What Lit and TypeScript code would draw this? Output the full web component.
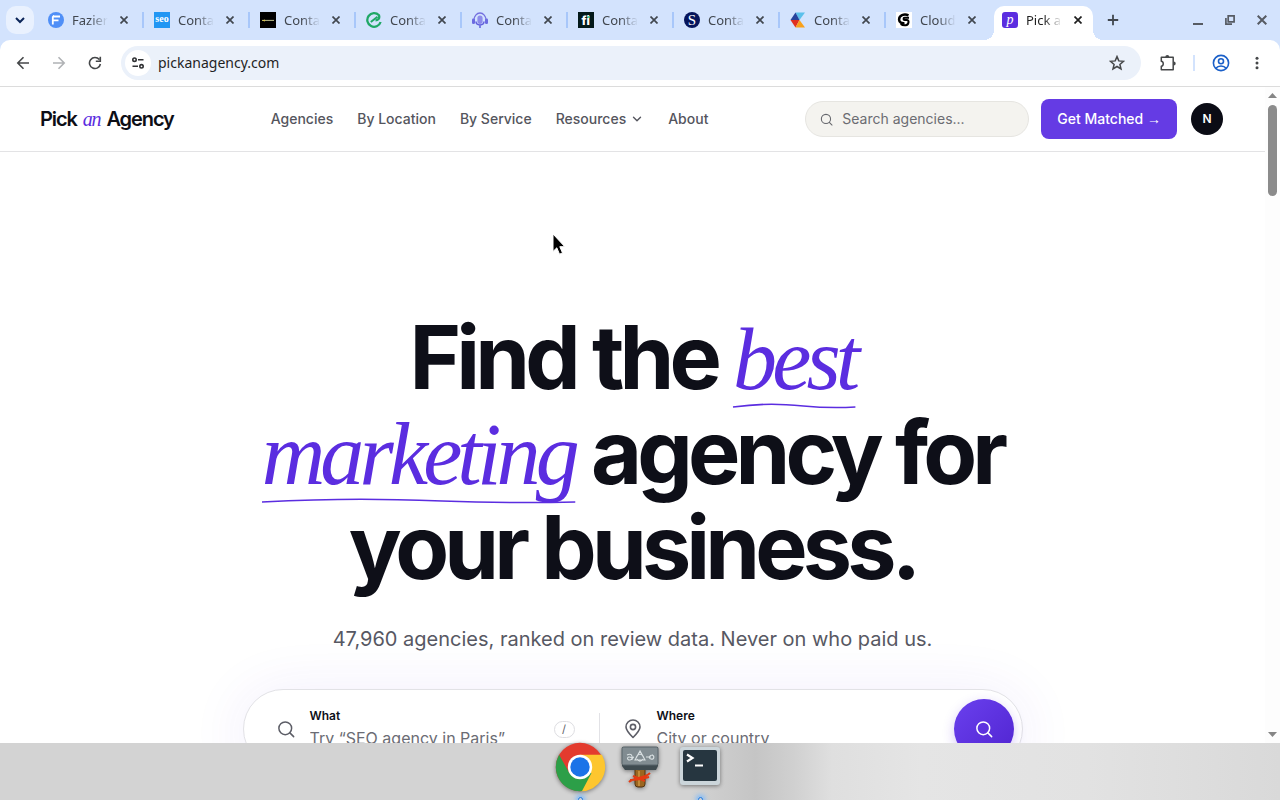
import { LitElement, html, css, svg, nothing } from "lit";
import { customElement, property } from "lit/decorators.js";

const favicons: Record<string, unknown> = {
  fazier: svg`<circle cx="8" cy="8" r="8" fill="#4f8ff7"/><path d="M5 4.500h7M5 8.300h5.500" stroke="#fff" stroke-width="1.800"/><path d="M6 3.700 4.800 5v7.500" fill="none" stroke="#fff" stroke-width="1.800"/>`,
  seo: svg`<rect width="16" height="16" fill="#2196f3"/><text x="8" y="10.400" text-anchor="middle" font-family="Liberation Serif, serif" font-weight="700" font-size="10" fill="#fff">seo</text>`,
  dark: svg`<rect width="16" height="16" fill="#000"/><path d="M2 8.400h12" stroke="#bdbd8a" stroke-width="1"/><path d="M2 8.400 5 7.400v2z" fill="#d8c34e"/>`,
  ecircle: svg`<path d="M14.600 10A6.800 6.800 0 1 1 13 3.300C14 6.500 12 8.300 9.500 8.300" fill="none" stroke="#1fa866" stroke-width="2.300"/><path d="M4.800 10 11.500 4.800" fill="none" stroke="#1fa866" stroke-width="2"/>`,
  mic: svg`<path d="M2 8a6 7 0 0 1 12 0" fill="none" stroke="#7470df" stroke-width="1.300"/><rect x="0" y="6.500" width="3" height="5.500" rx="1.300" fill="#6c6be0"/><rect x="13" y="6.500" width="3" height="5.500" rx="1.300" fill="#6c6be0"/><rect x="5.400" y="3.500" width="5.200" height="8.400" rx="2.600" fill="#8d8bea"/><path d="M4 9.500c0 4.500 8 4.500 8 0M8 12.500V16" fill="none" stroke="#6260dc" stroke-width="1.500"/>`,
  fi: svg`<rect width="16" height="16" fill="#041a1a"/><text x="7.800" y="12.600" text-anchor="middle" font-family="Inter, sans-serif" font-weight="800" font-size="12" fill="#fff">fi</text><rect x="9.400" y="4" width="2.300" height="2" fill="#52d6a2"/>`,
  s: svg`<circle cx="8" cy="8" r="8" fill="#06155c"/><text x="8" y="13" text-anchor="middle" font-family="Liberation Serif, serif" font-size="15" fill="#fff">S</text>`,
  kite: svg`<path d="M5.500.5H15L9.500 8z" fill="#5bc0eb"/><path d="M5.500.5 9.500 8H.5z" fill="#27439c"/><path d="M.5 8h9l-4 7.500z" fill="#e0301e"/><path d="M9.500 8 15 15.500H5.500z" fill="#f9a11b"/>`,
  g: svg`<rect width="16" height="16" fill="#fff"/><path d="M12.500 3.400C8 1.200 3 3.600 3.100 7.600c.1 3 2.600 3.900 5.400 3.600" fill="none" stroke="#000" stroke-width="2.500"/><path d="M13 5.800H8.600c-1.400 0-1.400 2.200 0 2.200h2.300c2.600 0 2 4.800-1.200 5.200-2 .2-3.700-.2-5-1.300" fill="none" stroke="#000" stroke-width="2"/>`,
  pick: svg`<rect width="16" height="16" rx="3" fill="#5b2de0"/><text x="8" y="11.600" text-anchor="middle" font-family="Liberation Serif, serif" font-style="italic" font-size="14" fill="#fff">p</text>`,
};

const tabs = [
  { icon: "fazier", title: "Fazier Launch" },
  { icon: "seo", title: "Contact us" },
  { icon: "dark", title: "Contact us" },
  { icon: "ecircle", title: "Contact us" },
  { icon: "mic", title: "Contact us" },
  { icon: "fi", title: "Contact us" },
  { icon: "s", title: "Contact us" },
  { icon: "kite", title: "Contact us" },
  { icon: "g", title: "Cloudways" },
  { icon: "pick", title: "Pick an Agency", active: true },
];

const magnifier = (size: number) => html`<svg width=${size} height=${size} viewBox="0 0 24 24" fill="none" stroke="currentColor" stroke-width="2" stroke-linecap="round" aria-hidden="true"><circle cx="11" cy="11" r="8.500"/><path d="m17.200 17.200 5 5"/></svg>`;

@customElement("browser-tab")
class BrowserTab extends LitElement {
  @property() icon = "";
  @property() label = "";
  @property({ type: Boolean, reflect: true }) active = false;
  @property({ type: Boolean, reflect: true }) divided = false;

  static styles = css`
    :host { flex: 0 1 106px; min-width: 0; height: 100%; box-sizing: border-box; display: flex; align-items: center; padding: 0 10px 0 12px; position: relative; isolation: isolate; color: #41474f; }
    :host([divided])::before { content: ""; position: absolute; left: 0; top: 12px; width: 2px; height: 16px; background: #a8c7fa; }
    :host([active]) { color: #1f1f1f; }
    .shape { position: absolute; z-index: -1; inset: 6px 3px 0 4px; background: #fff; border-radius: 10px 10px 0 0; }
    .shape::before, .shape::after { content: ""; position: absolute; bottom: 0; width: 10px; height: 10px; }
    .shape::before { right: 100%; background: radial-gradient(circle at 0 0, transparent 10px, #fff 10px); }
    .shape::after { left: 100%; background: radial-gradient(circle at 100% 0, transparent 10px, #fff 10px); }
    .icon { flex: none; }
    .title { flex: 1; min-width: 0; margin: 0 8px; overflow: hidden; white-space: nowrap; font: 13px/20px "Noto Sans", sans-serif; -webkit-mask-image: linear-gradient(90deg, #000 50%, transparent); mask-image: linear-gradient(90deg, #000 50%, transparent); }
    button { flex: none; width: 16px; height: 16px; padding: 0; border: 0; background: none; color: inherit; display: grid; place-items: center; }
  `;

  render() {
    return html`
      ${this.active ? html`<span class="shape"></span>` : nothing}
      <svg class="icon" width="16" height="16" viewBox="0 0 16 16" aria-hidden="true">${favicons[this.icon]}</svg>
      <span class="title">${this.label}</span>
      <button aria-label="Close tab"><svg width="8" height="8" viewBox="0 0 8 8" stroke="currentColor" stroke-width="1.700"><path d="m.5.5 7 7m0-7-7 7"/></svg></button>
    `;
  }
}

@customElement("browser-chrome")
class BrowserChrome extends LitElement {
  static styles = css`
    :host { display: block; font-family: "Noto Sans", sans-serif; background: #d3e3fd; }
    button { padding: 0; border: 0; background: none; color: inherit; display: grid; place-items: center; flex: none; }
    .strip { display: flex; align-items: center; height: 40px; color: #41474f; }
    .list { width: 28px; height: 28px; margin: 0 2px 0 6px; border-radius: 10px; background: #e9f1fe; color: #0b2559; }
    .tabs { display: flex; flex: 0 1 auto; min-width: 0; height: 100%; }
    .new { width: 28px; height: 28px; margin-left: 3px; }
    .window { display: flex; margin-left: auto; padding-right: 2px; color: #565b63; }
    .window button { width: 32px; height: 28px; }
    .toolbar { display: flex; align-items: center; box-sizing: border-box; height: 47px; padding: 0 5px; background: #fff; border-radius: 10px 10px 0 0; border-bottom: 1px solid #dcdcdc; color: #454749; }
    .toolbar button { width: 36px; height: 34px; }
    .toolbar .off { color: #b0b2b5; }
    .address { flex: 1; min-width: 0; display: flex; align-items: center; height: 34px; margin: 0 9px 0 8px; padding: 0 6px 0 4px; border-radius: 17px; background: #ebf1fa; }
    .toolbar .site { width: 26px; height: 26px; border-radius: 13px; background: #fff; color: #303134; }
    .address input { flex: 1; min-width: 0; margin: 0 0 0 7px; padding: 0; border: 0; outline: 0; background: none; font: 14px/20px "Noto Sans", sans-serif; color: #1f1f1f; }
    .rule { width: 2px; height: 16px; margin: 0 8px 0 7px; background: #d3e3fd; }
    .toolbar .profile { color: #1a5fc8; }
  `;

  render() {
    return html`
      <div class="strip">
        <button class="list" aria-label="Search tabs"><svg width="10" height="7" viewBox="0 0 10 7" fill="none" stroke="currentColor" stroke-width="2"><path d="m1 1 4 4 4-4"/></svg></button>
        <div class="tabs">
          ${tabs.map((t, i) => html`<browser-tab .icon=${t.icon} .label=${t.title} ?active=${!!t.active} ?divided=${i > 0 && !t.active}></browser-tab>`)}
        </div>
        <button class="new" aria-label="New tab"><svg width="12" height="12" viewBox="0 0 12 12" stroke="currentColor" stroke-width="1.800"><path d="M6 .8v10.400M.8 6h10.400"/></svg></button>
        <div class="window">
          <button aria-label="Minimize"><svg width="10" height="10" viewBox="0 0 10 10" stroke="currentColor" stroke-width="2"><path d="M0 9h10"/></svg></button>
          <button aria-label="Restore"><svg width="10" height="10" viewBox="0 0 10 10" fill="none" stroke="currentColor" stroke-width="1.700"><path d="M3.200.9h5.900v5.900H3.200zM.9 3v6.100H7"/></svg></button>
          <button aria-label="Close"><svg width="10" height="10" viewBox="0 0 10 10" stroke="currentColor" stroke-width="2"><path d="m.7.7 8.600 8.600m0-8.600L.7 9.300"/></svg></button>
        </div>
      </div>
      <div class="toolbar">
        <button aria-label="Back"><svg width="14" height="14" viewBox="0 0 14 14" fill="none" stroke="currentColor" stroke-width="1.600"><path d="M13 7H2m5.500-5.700L1.800 7l5.700 5.700"/></svg></button>
        <button class="off" aria-label="Forward"><svg width="14" height="14" viewBox="0 0 14 14" fill="none" stroke="currentColor" stroke-width="1.600"><path d="M1 7h11M6.500 1.300 12.200 7l-5.700 5.700"/></svg></button>
        <button aria-label="Reload"><svg width="14" height="14" viewBox="0 0 14 14" fill="none" stroke="currentColor" stroke-width="1.600"><path d="M11.300 3.600A5.500 5.500 0 1 0 12.400 8M12.300.8v4.500H7.800"/></svg></button>
        <div class="address">
          <button class="site" aria-label="Site information"><svg width="14" height="14" viewBox="0 0 14 14" fill="none" stroke="currentColor" stroke-width="1.600"><circle cx="3.500" cy="3.700" r="1.700"/><path d="M7 3.700h5.500M1.500 10.300H7"/><circle cx="10.500" cy="10.300" r="1.700"/></svg></button>
          <input type="text" aria-label="Address" value="pickanagency.com">
          <button aria-label="Bookmark this page"><svg width="16" height="16" viewBox="0 0 16 16" fill="none" stroke="currentColor" stroke-width="1.500"><path d="m8 1.600 1.800 4.300 4.700.4-3.600 3.100 1.100 4.600-4-2.500L4 14l1.100-4.600-3.600-3.100 4.700-.4z"/></svg></button>
        </div>
        <button aria-label="Extensions"><svg width="18" height="18" viewBox="0 0 18 18" fill="none" stroke="currentColor" stroke-width="1.500"><path d="M2.300 3.300H14.200V15.700H2.300V12.300c2.600-.4 2.600-4.600 0-5z" stroke-linejoin="round"/><path d="M6.300 2.900a2 2 0 0 1 4 0zM14.700 7.600a2 2 0 0 1 0 4z" fill="currentColor" stroke="none"/></svg></button>
        <span class="rule"></span>
        <button class="profile" aria-label="Profile"><svg width="18" height="18" viewBox="0 0 18 18" fill="none" stroke="currentColor" stroke-width="1.600"><circle cx="9" cy="9" r="7.600"/><circle cx="9" cy="7.200" r="2.500"/><path d="M3.800 14.200c2.600-3 7.800-3 10.400 0"/></svg></button>
        <button aria-label="Menu"><svg width="4" height="14" viewBox="0 0 4 14" fill="currentColor"><circle cx="2" cy="2.200" r="1.500"/><circle cx="2" cy="7" r="1.500"/><circle cx="2" cy="11.800" r="1.500"/></svg></button>
      </div>
    `;
  }
}

@customElement("site-header")
class SiteHeader extends LitElement {
  static styles = css`
    :host { display: flex; align-items: center; justify-content: space-between; box-sizing: border-box; height: 65px; padding: 0 40px; border-bottom: 1px solid #e3e3e5; background: #fff; font-family: Inter, sans-serif; }
    a { color: inherit; text-decoration: none; }
    .logo { font-size: 20px; line-height: 28px; font-weight: 600; letter-spacing: -0.055em; color: #0d0e16; white-space: nowrap; }
    .logo em { margin: 0 2px; font-family: "Liberation Serif", serif; font-weight: 400; color: #5b2de0; }
    nav { display: flex; gap: 24px; font-size: 14px; line-height: 20px; font-weight: 500; color: #54555d; white-space: nowrap; }
    .drop { display: flex; align-items: center; gap: 4px; }
    .actions { display: flex; align-items: center; gap: 12px; }
    .search { display: flex; align-items: center; gap: 9px; box-sizing: border-box; width: 224px; height: 36px; padding: 0 14px; border: 1px solid #e6e5e1; border-radius: 18px; background: #f4f3ef; color: #65666c; }
    .search svg { flex: none; }
    .search input { flex: 1; min-width: 0; padding: 0; border: 0; outline: 0; background: none; font: 14px/20px Inter, sans-serif; color: #0d0e16; }
    .search input::placeholder { color: #6b6c72; opacity: 1; }
    .cta { height: 40px; padding: 0 16px; border: 0; border-radius: 8px; background: #653be4; color: #fff; font: 500 14px/20px Inter, sans-serif; white-space: nowrap; }
    .arrow { font-family: "Liberation Sans", sans-serif; }
    .avatar { width: 32px; height: 32px; margin: 0 2px; padding: 0; border: 0; border-radius: 50%; background: #0b0c15; color: #fff; font: 600 12px/16px Inter, sans-serif; }
  `;

  render() {
    return html`
      <a class="logo" href="#">Pick <em>an</em> Agency</a>
      <nav>
        <a href="#">Agencies</a>
        <a href="#">By Location</a>
        <a href="#">By Service</a>
        <a class="drop" href="#">Resources <svg width="14" height="14" viewBox="0 0 14 14" fill="none" stroke="currentColor" stroke-width="1.400" stroke-linecap="round" stroke-linejoin="round"><path d="m3.500 5.200 3.500 3.500 3.500-3.500"/></svg></a>
        <a href="#">About</a>
      </nav>
      <div class="actions">
        <label class="search">${magnifier(13)}<input type="search" aria-label="Search agencies" placeholder="Search agencies..."></label>
        <button class="cta">Get Matched <span class="arrow">→</span></button>
        <button class="avatar" aria-label="Account N">N</button>
      </div>
    `;
  }
}

@customElement("hero-section")
class HeroSection extends LitElement {
  static styles = css`
    :host { display: flex; flex-direction: column; align-items: center; padding: 158px 40px 80px; font-family: Inter, sans-serif; background: #fff; }
    h1 { margin: 0; max-width: 760px; text-align: center; font-size: 88px; line-height: 95px; font-weight: 700; letter-spacing: -0.055em; color: #0e0f18; }
    em { position: relative; display: inline-block; font-family: "Liberation Serif", serif; font-weight: 400; line-height: 80px; color: #5b2de0; }
    em svg { position: absolute; left: 0; bottom: -9px; width: 100%; height: 6px; overflow: visible; }
    .lead { margin: 29px 0 0; font-size: 20px; line-height: 30px; color: #575863; text-align: center; }
    form { display: flex; align-items: center; box-sizing: border-box; width: 100%; max-width: 780px; margin-top: 35px; padding: 9px 8px 9px 9px; border: 1px solid #e2e2e6; border-radius: 40px; background: #fff; box-shadow: 0 4px 60px rgba(91, 45, 224, .09); }
    .field { display: flex; align-items: center; min-width: 0; color: #5c5d66; }
    .what { flex: 1; padding: 0 24px; }
    .where { flex: 1; padding: 0 32px 0 24px; }
    .field > svg { flex: none; }
    .copy { flex: 1; min-width: 0; display: flex; flex-direction: column; gap: 2px; margin-left: 15px; }
    label { font-size: 12px; line-height: 16px; font-weight: 600; color: #0e0f18; }
    input { width: 100%; padding: 0; border: 0; outline: 0; background: none; font: 16px/24px Inter, sans-serif; color: #0e0f18; }
    input::placeholder { color: #6b6c74; opacity: 1; }
    kbd { box-sizing: border-box; width: 21px; height: 17px; border: 1px solid #dedee2; border-radius: 9px; text-align: center; font: 11px/15px Inter, sans-serif; color: #5c5d66; }
    .rule { width: 1px; height: 32px; background: #e2e2e6; }
    .go { flex: none; display: grid; place-items: center; width: 60px; height: 60px; padding: 0; border: 0; border-radius: 50%; color: #fff; background: linear-gradient(135deg, #6a40ee, #5024d0); box-shadow: 0 4px 12px rgba(91, 45, 224, .25); }
  `;

  private swash() {
    return html`<svg viewBox="0 0 200 6" preserveAspectRatio="none" fill="none" stroke="currentColor" stroke-width="1.600" aria-hidden="true"><path d="M0 4C50 0 80 1 115 3S170 5 200 4" vector-effect="non-scaling-stroke"/></svg>`;
  }

  render() {
    return html`
      <h1>Find the <em>best${this.swash()}</em> <em>marketing${this.swash()}</em> agency for your business.</h1>
      <p class="lead">47,960 agencies, ranked on review data. Never on who paid us.</p>
      <form>
        <div class="field what">
          ${magnifier(18)}
          <div class="copy"><label for="what">What</label><input id="what" type="text" placeholder="Try “SEO agency in Paris”"></div>
          <kbd>/</kbd>
        </div>
        <span class="rule"></span>
        <div class="field where">
          <svg width="18" height="20" viewBox="0 0 18 20" fill="none" stroke="currentColor" stroke-width="1.600" stroke-linejoin="round"><path d="M9 18.500C5.500 15 2 11.500 2 8a7 7 0 0 1 14 0c0 3.500-3.500 7-7 10.500z"/><circle cx="9" cy="8" r="2.600"/></svg>
          <div class="copy"><label for="where">Where</label><input id="where" type="text" placeholder="City or country"></div>
        </div>
        <button class="go" type="button" aria-label="Search">${magnifier(18)}</button>
      </form>
    `;
  }
}

@customElement("desktop-dock")
class DesktopDock extends LitElement {
  static styles = css`
    :host { position: relative; display: flex; justify-content: center; gap: 10px; height: 57px; clip-path: inset(-10px 0 0 0); background: linear-gradient(90deg, #d3d3d3 54%, #cdcdcd 56%, #c5c5c5 59%, #d0d0d0 62%, #dfdfdf 65%, #e5e5e5 72%, #e2e2e2 85%, #d9d9d9); }
    button { width: 50px; height: 50px; padding: 0; border: 0; background: none; position: relative; }
    button svg { display: block; overflow: visible; filter: drop-shadow(0 1px 2px rgba(0, 0, 0, .45)); }
    .running::after { content: ""; position: absolute; left: 23px; top: 54px; box-sizing: border-box; width: 5px; height: 5px; border: 1px solid #1678e8; border-radius: 50%; box-shadow: 0 0 5px 2px #75b8ff; }
  `;

  render() {
    return html`
      <button class="running" aria-label="Chrome"><svg width="50" height="50" viewBox="0 0 50 50">
        <circle cx="25" cy="24" r="24.200" fill="#e33b2e"/>
        <path d="M25 11.800h21.900A24.200 24.200 0 0 1 25.500 48.200L36 30z" fill="#fdc62f"/>
        <path d="M4.100 11.800A24.200 24.200 0 0 0 27 48.100L36.500 30 14.500 30.200z" fill="#2c9f48"/>
        <circle cx="25" cy="24" r="12.200" fill="#fff"/><circle cx="25" cy="24" r="9.700" fill="#1a73e8"/></svg></button>
      <button aria-label="Hammer"><svg width="50" height="50" viewBox="0 0 50 50">
        <rect x="20" y="22" width="10" height="22" rx="3" fill="#9b6620" stroke="#55340f"/><path d="M24 28v15" stroke="#c28a38" stroke-width="2"/>
        <path d="M14 39c5-5 15-3 21-9m-20 7c7 0 12-1 19-3M18 33l12 5" fill="none" stroke="#e43b12" stroke-width="2"/>
        <path d="M7 4h36v19l-2 4H10l-3-4z" fill="#3f4b50"/><rect x="7" y="4" width="36" height="18" rx="1.500" fill="#818c91" stroke="#59656a"/>
        <path d="m25 8-5 9h10zM21 15c2-5 6-5 8 0M22 16c2 3 4 3 6 0M12 12c4-2 6 0 5 5m0-2c-5-3-6 2-2 2 2 0 3-3 4-3M38 12c-4 0-5 3-2 4s4-3 1-4M31 14h5" fill="none" stroke="#d9e0e2" stroke-width="1.100"/></svg></button>
      <button class="running" aria-label="Terminal"><svg width="50" height="50" viewBox="0 0 50 50">
        <rect x="5" y="4" width="40" height="38" rx="3" fill="#cbd5da"/><rect x="8" y="7" width="34" height="31" rx="2" fill="#263640"/>
        <path d="m12 11.500 5.500 3.500-5.500 3.500" fill="none" stroke="#fff" stroke-width="2.200"/><path d="M20 22.500h8" stroke="#fff" stroke-width="2"/></svg></button>
    `;
  }
}

@customElement("app-root")
class AppRoot extends LitElement {
  static styles = css`
    :host { position: relative; display: flex; flex-direction: column; height: 100vh; overflow: hidden; background: #fff; }
    browser-chrome, desktop-dock { flex: none; }
    .viewport { flex: 1; min-height: 0; display: flex; }
    .page { flex: 1; min-width: 0; overflow: hidden; }
    .scroll { flex: none; box-sizing: border-box; width: 15px; display: flex; flex-direction: column; align-items: center; padding: 6px 0; background: #fdfdfd; color: #858585; }
    .thumb { width: 9px; height: 91px; margin-top: 7px; border-radius: 5px; background: #8b8b8b; }
    .down { margin-top: auto; }
    .pointer { position: absolute; left: 552px; top: 233px; }
  `;

  render() {
    return html`
      <browser-chrome></browser-chrome>
      <div class="viewport">
        <main class="page"><site-header></site-header><hero-section></hero-section></main>
        <div class="scroll" aria-hidden="true">
          <svg width="9" height="5" viewBox="0 0 9 5" fill="currentColor"><path d="M0 5 4.500 0 9 5z"/></svg>
          <div class="thumb"></div>
          <svg class="down" width="9" height="5" viewBox="0 0 9 5" fill="currentColor"><path d="m0 0 4.500 5L9 0z"/></svg>
        </div>
      </div>
      <desktop-dock></desktop-dock>
      <svg class="pointer" width="14" height="24" viewBox="0 0 14 24" aria-hidden="true"><path d="M1 1v17.500l3.800-3.700 2.700 6.400 3-1.300-2.700-6.200h5z" fill="#000" stroke="#fff"/></svg>
    `;
  }
}
